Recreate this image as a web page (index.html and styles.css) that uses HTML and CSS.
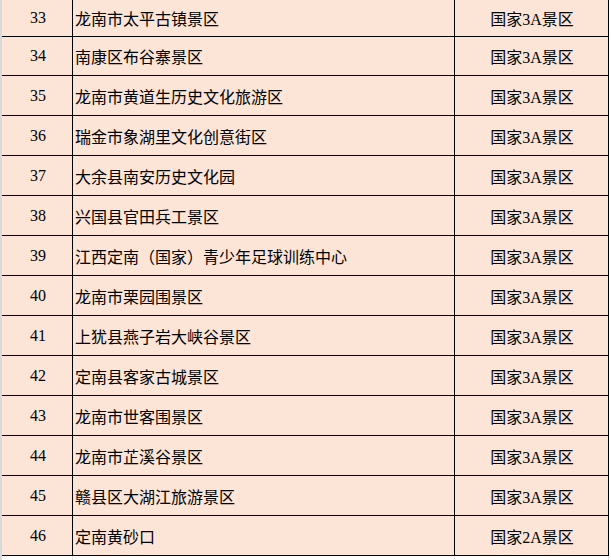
FILE: index.html
```html
<!DOCTYPE html>
<html lang="zh-CN">
<head>
<meta charset="utf-8">
<title>景区列表</title>
<link rel="stylesheet" href="styles.css">
</head>
<body>
<div class="sheet">
  <div class="gutter"></div>
  <div class="table">
    <div class="row first"><div class="c num">33</div><div class="c name">龙南市太平古镇景区</div><div class="c lvl">国家3A景区</div></div>
    <div class="row short"><div class="c num">34</div><div class="c name">南康区布谷寨景区</div><div class="c lvl">国家3A景区</div></div>
    <div class="row"><div class="c num">35</div><div class="c name">龙南市黄道生历史文化旅游区</div><div class="c lvl">国家3A景区</div></div>
    <div class="row"><div class="c num">36</div><div class="c name">瑞金市象湖里文化创意街区</div><div class="c lvl">国家3A景区</div></div>
    <div class="row"><div class="c num">37</div><div class="c name">大余县南安历史文化园</div><div class="c lvl">国家3A景区</div></div>
    <div class="row"><div class="c num">38</div><div class="c name">兴国县官田兵工景区</div><div class="c lvl">国家3A景区</div></div>
    <div class="row"><div class="c num">39</div><div class="c name">江西定南（国家）青少年足球训练中心</div><div class="c lvl">国家3A景区</div></div>
    <div class="row"><div class="c num">40</div><div class="c name">龙南市栗园围景区</div><div class="c lvl">国家3A景区</div></div>
    <div class="row"><div class="c num">41</div><div class="c name">上犹县燕子岩大峡谷景区</div><div class="c lvl">国家3A景区</div></div>
    <div class="row"><div class="c num">42</div><div class="c name">定南县客家古城景区</div><div class="c lvl">国家3A景区</div></div>
    <div class="row"><div class="c num">43</div><div class="c name">龙南市世客围景区</div><div class="c lvl">国家3A景区</div></div>
    <div class="row"><div class="c num">44</div><div class="c name">龙南市芷溪谷景区</div><div class="c lvl">国家3A景区</div></div>
    <div class="row"><div class="c num">45</div><div class="c name">赣县区大湖江旅游景区</div><div class="c lvl">国家3A景区</div></div>
    <div class="row"><div class="c num">46</div><div class="c name">定南黄砂口</div><div class="c lvl">国家2A景区</div></div>
    <div class="row empty"><div class="c"></div><div class="c"></div><div class="c"></div></div>
  </div>
</div>
</body>
</html>
```
FILE: styles.css
```css
html, body {
  margin: 0;
  padding: 0;
  background: #ffffff;
  overflow: hidden;
}
.sheet {
  display: flex;
  width: 611px;
  height: 560px;
  overflow: hidden;
  font-family: "Liberation Serif", "Noto Sans CJK SC", serif;
  font-size: 16px;
  color: #000;
}
.gutter {
  width: 2px;
  background: #d9d9d9;
  flex: none;
}
.table {
  width: 607px;
  flex: none;
}
.row {
  display: grid;
  grid-template-columns: 71px 382px 154px;
  height: 40px;
  border-bottom: 1px solid #000;
  box-sizing: border-box;
  background: #fce4d6;
}
.row.first { height: 37px; }
.row.short { height: 39px; }
.c {
  border-right: 1px solid #000;
  display: flex;
  align-items: center;
  white-space: nowrap;
  overflow: hidden;
}
.num { justify-content: center; padding-left: 2px; }
.name { padding-left: 2px; }
.lvl { justify-content: center; padding-left: 1px; }
.row.empty {
  height: 4px;
  background: #ffffff;
  border-bottom: none;
}
.row.empty .c { border-right: 1px solid #e3e3e3; }
```
